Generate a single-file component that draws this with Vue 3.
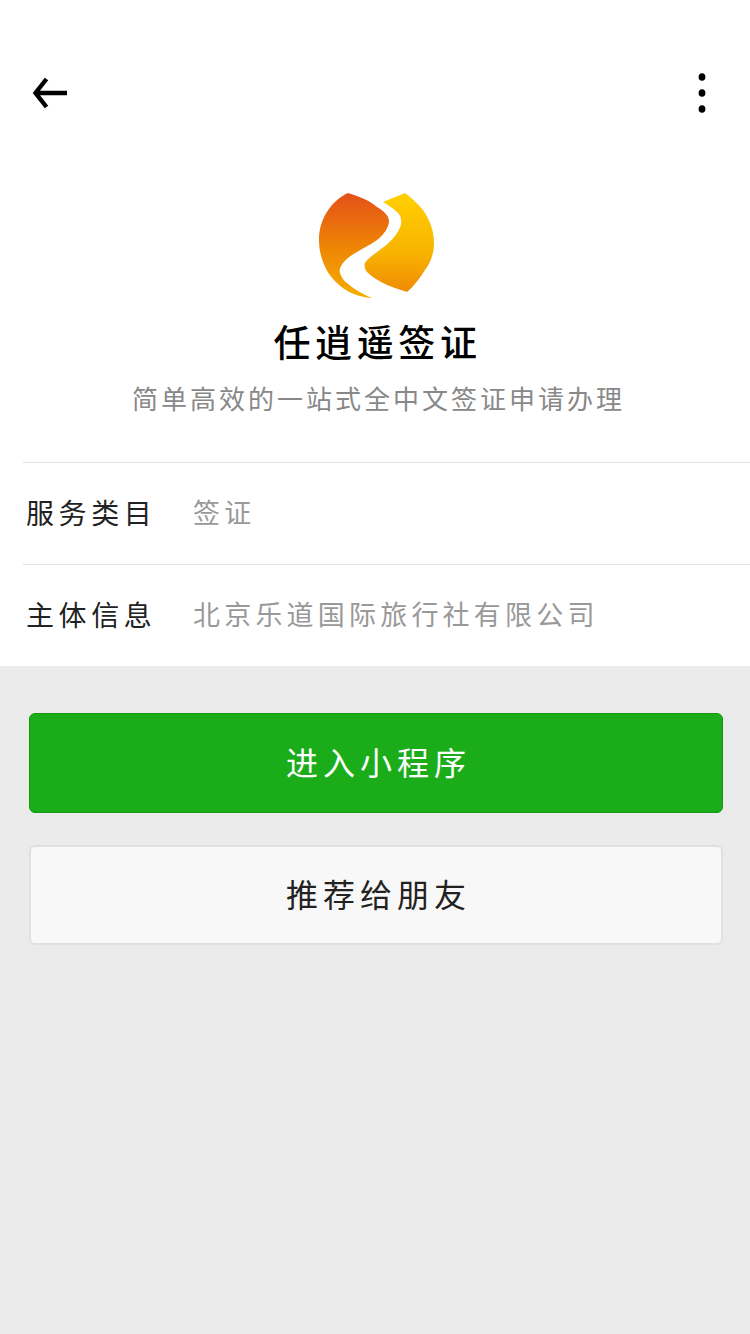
<template>
  <div class="page">
    <div class="top-panel">
      <div class="nav-bar">
        <svg class="back-icon" width="36" height="36" viewBox="0 0 36 36">
          <path d="M14.5 4 L3.5 18 L14.5 32 M3.5 18 H35" fill="none" stroke="#000" stroke-width="4.4" />
        </svg>
        <svg class="more-icon" width="8" height="40" viewBox="0 0 8 40">
          <ellipse v-for="cy in [4, 20, 36]" :key="cy" cx="4" :cy="cy" rx="3.4" ry="3.8" fill="#000" />
        </svg>
      </div>

      <div class="profile">
        <svg class="logo" width="150" height="130" viewBox="0 0 150 130">
          <defs>
            <linearGradient id="leftFill" x1="0" y1="0" x2="0" y2="1">
              <stop offset="0" stop-color="#e4501a" />
              <stop offset="0.5" stop-color="#ee8405" />
              <stop offset="1" stop-color="#f6ae00" />
            </linearGradient>
            <linearGradient id="rightFill" x1="0" y1="0" x2="0" y2="1">
              <stop offset="0" stop-color="#ffd000" />
              <stop offset="0.6" stop-color="#f8b400" />
              <stop offset="1" stop-color="#ef8a05" />
            </linearGradient>
          </defs>
          <path
            fill="url(#leftFill)"
            d="M48 13 C58 16 69 20 77 27 C84 31 89 36 89 41 C89 47 84 55 77 60 C70 65 63 68 57 72 C50 76 46 79 43 83 C40 87 39 90 40 93 C41 97 44 101 47 103 C55 110 63 114 72 118 C58 117 46 112 37 103 C26 93 19 77 19 60 C19 39 31 21 48 13 Z"
          />
          <path
            fill="url(#rightFill)"
            d="M83 22 C90 19 98 16 105 13 C112 18 118 24 123 30 C130 40 134 51 134 63 C134 73 131 82 125 90 C120 98 114 106 107 112 C99 109 91 107 83 103 C77 100 71 96 67 92 C65 89 64 86 65 83 C67 79 72 76 77 72 C84 67 92 61 97 53 C100 48 102 44 101 40 C101 36 99 34 97 32 C93 28 88 25 83 22 Z"
          />
        </svg>
        <h1 class="name">任逍遥签证</h1>
        <p class="desc">简单高效的一站式全中文签证申请办理</p>
      </div>

      <div v-for="row in rows" :key="row.label" class="info-row">
        <span class="info-label">{{ row.label }}</span>
        <span class="info-value">{{ row.value }}</span>
      </div>
    </div>

    <div class="actions">
      <button class="btn btn-primary">进入小程序</button>
      <button class="btn btn-default">推荐给朋友</button>
    </div>
  </div>
</template>

<script setup>
const rows = [
  { label: '服务类目', value: '签证' },
  { label: '主体信息', value: '北京乐道国际旅行社有限公司' }
];
</script>

<style>
html,
body {
  background: #ebebeb;
}
</style>

<style scoped>
.page {
  min-height: 1334px;
  background: #ebebeb;
  font-family: "Noto Sans CJK SC", "Noto Sans", sans-serif;
}

.top-panel {
  height: 666px;
  box-sizing: border-box;
  background: #fff;
  overflow: hidden;
}

.nav-bar {
  display: flex;
  justify-content: space-between;
  align-items: center;
  height: 40px;
  padding: 73px 44px 0 32px;
}

.profile {
  display: flex;
  flex-direction: column;
  align-items: center;
  height: 349px;
  padding-top: 67px;
  box-sizing: border-box;
}

.logo {
  flex: none;
}

.name {
  margin: 4px 0 0;
  padding-left: 5px;
  font-size: 37px;
  line-height: 54px;
  font-weight: 500;
  letter-spacing: 4.6px;
  color: #000;
}

.desc {
  margin: 12px 0 0;
  padding-left: 7px;
  font-size: 26px;
  line-height: 36px;
  font-weight: 400;
  letter-spacing: 3px;
  color: #888;
}

.info-row {
  display: flex;
  align-items: center;
  height: 97px;
  margin-left: 23px;
  padding: 0 0 4px 3px;
  border-top: 1px solid #e2e2e2;
}

.info-label {
  width: 167px;
  flex: none;
  font-size: 28px;
  letter-spacing: 4.6px;
  color: #222;
}

.info-value {
  font-size: 27px;
  letter-spacing: 4.2px;
  color: #999;
}

.actions {
  display: flex;
  flex-direction: column;
  gap: 32px;
  padding: 47px 27px 0 29px;
}

.btn {
  height: 100px;
  box-sizing: border-box;
  padding: 0 0 4px 5px;
  border-radius: 6px;
  font-family: inherit;
  font-size: 32px;
  letter-spacing: 5px;
}

.btn-primary {
  background: #1aad19;
  border: 1px solid #159a14;
  color: #fff;
}

.btn-default {
  background: #f8f8f8;
  border: 2px solid #e0e0e0;
  color: #222;
}
</style>
